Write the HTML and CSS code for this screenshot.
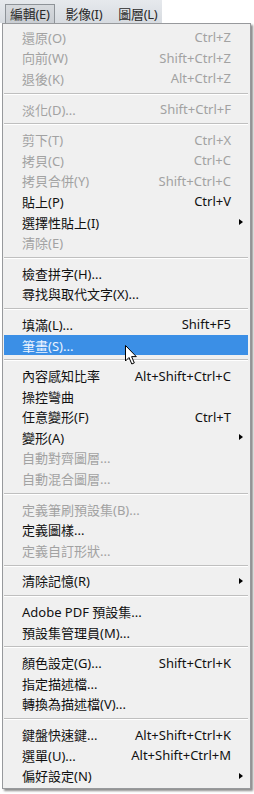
FILE: index.html
```html
<!DOCTYPE html>
<html lang="zh-Hant">
<head>
<meta charset="utf-8">
<title>Edit menu</title>
<link rel="stylesheet" href="styles.css">
</head>
<body>
<div class="frame">
  <div class="menubar">
    <span class="mb-item active">編輯(E)</span>
    <span class="mb-item">影像(I)</span>
    <span class="mb-item">圖層(L)</span>
  </div>
  <ul class="menu">
    <li class="item dis"><span class="lbl">還原(O)</span><span class="key">Ctrl+Z</span></li>
    <li class="item dis"><span class="lbl">向前(W)</span><span class="key">Shift+Ctrl+Z</span></li>
    <li class="item dis"><span class="lbl">退後(K)</span><span class="key">Alt+Ctrl+Z</span></li>
    <li class="sep"></li>
    <li class="item dis"><span class="lbl">淡化(D)...</span><span class="key">Shift+Ctrl+F</span></li>
    <li class="sep"></li>
    <li class="item dis"><span class="lbl">剪下(T)</span><span class="key">Ctrl+X</span></li>
    <li class="item dis"><span class="lbl">拷貝(C)</span><span class="key">Ctrl+C</span></li>
    <li class="item dis"><span class="lbl">拷貝合併(Y)</span><span class="key">Shift+Ctrl+C</span></li>
    <li class="item"><span class="lbl">貼上(P)</span><span class="key">Ctrl+V</span></li>
    <li class="item sub"><span class="lbl">選擇性貼上(I)</span><span class="key"></span></li>
    <li class="item dis"><span class="lbl">清除(E)</span><span class="key"></span></li>
    <li class="sep"></li>
    <li class="item"><span class="lbl">檢查拼字(H)...</span><span class="key"></span></li>
    <li class="item"><span class="lbl">尋找與取代文字(X)...</span><span class="key"></span></li>
    <li class="sep"></li>
    <li class="item"><span class="lbl">填滿(L)...</span><span class="key">Shift+F5</span></li>
    <li class="item sel"><span class="lbl">筆畫(S)...</span><span class="key"></span>
      <svg class="cursor" width="14" height="22" viewBox="0 0 14 22"><path d="M1.5 1.5 L1.5 17 L5 13.5 L7.8 20 L10.3 18.9 L7.6 12.6 L12.3 12.6 Z" fill="#fff" stroke="#000" stroke-width="1" stroke-linejoin="miter"/></svg>
    </li>
    <li class="sep"></li>
    <li class="item"><span class="lbl">內容感知比率</span><span class="key">Alt+Shift+Ctrl+C</span></li>
    <li class="item"><span class="lbl">操控彎曲</span><span class="key"></span></li>
    <li class="item"><span class="lbl">任意變形(F)</span><span class="key">Ctrl+T</span></li>
    <li class="item sub"><span class="lbl">變形(A)</span><span class="key"></span></li>
    <li class="item dis"><span class="lbl">自動對齊圖層...</span><span class="key"></span></li>
    <li class="item dis"><span class="lbl">自動混合圖層...</span><span class="key"></span></li>
    <li class="sep"></li>
    <li class="item dis"><span class="lbl">定義筆刷預設集(B)...</span><span class="key"></span></li>
    <li class="item"><span class="lbl">定義圖樣...</span><span class="key"></span></li>
    <li class="item dis"><span class="lbl">定義自訂形狀...</span><span class="key"></span></li>
    <li class="sep"></li>
    <li class="item sub"><span class="lbl">清除記憶(R)</span><span class="key"></span></li>
    <li class="sep"></li>
    <li class="item"><span class="lbl">Adobe PDF 預設集...</span><span class="key"></span></li>
    <li class="item"><span class="lbl">預設集管理員(M)...</span><span class="key"></span></li>
    <li class="sep"></li>
    <li class="item"><span class="lbl">顏色設定(G)...</span><span class="key">Shift+Ctrl+K</span></li>
    <li class="item"><span class="lbl">指定描述檔...</span><span class="key"></span></li>
    <li class="item"><span class="lbl">轉換為描述檔(V)...</span><span class="key"></span></li>
    <li class="sep"></li>
    <li class="item"><span class="lbl">鍵盤快速鍵...</span><span class="key">Alt+Shift+Ctrl+K</span></li>
    <li class="item"><span class="lbl">選單(U)...</span><span class="key">Alt+Shift+Ctrl+M</span></li>
    <li class="item sub"><span class="lbl">偏好設定(N)</span><span class="key"></span></li>
  </ul>
</div>
</body>
</html>
```
FILE: styles.css
```css
html, body {
  margin: 0;
  padding: 0;
  background: #ffffff;
}
body {
  width: 254px;
  height: 794px;
  overflow: hidden;
  font-family: "Noto Sans", "Noto Sans CJK TC", sans-serif;
  font-size: 13px;
  color: #111;
}
.frame {
  display: flex;
  flex-direction: column;
  width: 254px;
}
.menubar {
  display: flex;
  align-items: stretch;
  gap: 6px;
  width: 162px;
  height: 23px;
  box-sizing: border-box;
  padding: 4px 0 0 5px;
  background: linear-gradient(#e6e9ed, #d7dbe0);
}
.mb-item {
  display: flex;
  align-items: center;
  padding: 0 4px;
  border: 1px solid transparent;
  border-bottom: 0;
  color: #2a2a2a;
  line-height: 1;
  white-space: nowrap;
  letter-spacing: -0.3px;
}
.mb-item.active {
  border-color: #8e9398;
  background: linear-gradient(#d7dade, #c9cdd2);
}
.menu {
  list-style: none;
  margin: 0 0 0 2px;
  width: 249px;
  box-sizing: border-box;
  padding: 3px 2px 2px 1px;
  background: #f0f0f0;
  border: 1px solid #97999c;
  box-shadow: 2px 2px 2px rgba(0, 0, 0, 0.45);
}
.item {
  position: relative;
  display: grid;
  grid-template-columns: 1fr auto 17px;
  align-items: center;
  height: 20.6px;
  padding-left: 18px;
  white-space: nowrap;
}
.item.dis {
  color: #a2a2a2;
}
.key {
  text-align: right;
}
.sub::after {
  content: "";
  justify-self: center;
  width: 0;
  height: 0;
  border-top: 3.5px solid transparent;
  border-bottom: 3.5px solid transparent;
  border-left: 4px solid #000;
  margin-left: 2px;
}
.item.sel {
  background: #3b8fe6;
  color: #eaf3ff;
}
.cursor {
  position: absolute;
  left: 120px;
  top: 9px;
}
.sep {
  height: 10px;
  display: flex;
  flex-direction: column;
  justify-content: center;
}
.sep::before {
  content: "";
  display: block;
  height: 1px;
  background: #bfbfbf;
  border-bottom: 1px solid #ffffff;
}
```
